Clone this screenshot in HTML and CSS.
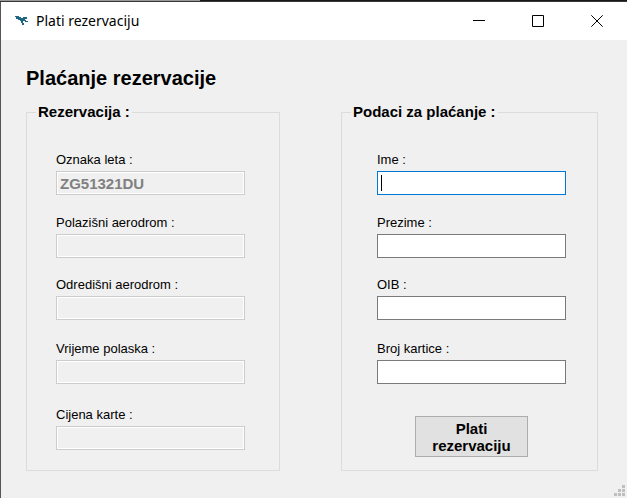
FILE: index.html
```html
<!DOCTYPE html>
<html lang="hr">
<head>
<meta charset="utf-8">
<title>Plati rezervaciju</title>
<link rel="stylesheet" href="styles.css">
</head>
<body>
<div class="window">
  <header class="titlebar">
    <svg class="logo" width="14" height="12" viewBox="0 0 14 12" aria-hidden="true">
      <path fill="#1f6684" d="M0 1h4v1h2v1h2V2h4v2h-2v1h1v1h2v1h-3V6H8v2h1v2H7V8H6V6H5V5H3V4H1V2H0z"/>
    </svg>
    <span class="caption">Plati rezervaciju</span>
    <div class="controls">
      <button type="button" class="control" aria-label="Minimiziraj">
        <svg width="12" height="12" viewBox="0 0 12 12"><path d="M0 5.500h12"/></svg>
      </button>
      <button type="button" class="control" aria-label="Maksimiziraj">
        <svg width="12" height="12" viewBox="0 0 12 12"><path d="M.5.500h11v11H.5z"/></svg>
      </button>
      <button type="button" class="control" aria-label="Zatvori">
        <svg width="12" height="12" viewBox="0 0 12 12"><path d="M.3.300l11.400 11.400M11.700.300L.3 11.700"/></svg>
      </button>
    </div>
  </header>
  <main class="content">
    <h1 class="heading">Plaćanje rezervacije</h1>
    <form class="panels">
      <fieldset class="panel">
        <legend>Rezervacija :</legend>
        <div class="fields">
          <div class="field"><label for="oznaka">Oznaka leta :</label><input id="oznaka" type="text" value="ZG51321DU" disabled></div>
          <div class="field"><label for="polaziste">Polazišni aerodrom :</label><input id="polaziste" type="text" disabled></div>
          <div class="field"><label for="odrediste">Odredišni aerodrom :</label><input id="odrediste" type="text" disabled></div>
          <div class="field"><label for="vrijeme">Vrijeme polaska :</label><input id="vrijeme" type="text" disabled></div>
          <div class="field"><label for="cijena">Cijena karte :</label><input id="cijena" type="text" disabled></div>
        </div>
      </fieldset>
      <fieldset class="panel panel-payment">
        <legend>Podaci za plaćanje :</legend>
        <div class="fields">
          <div class="field"><label for="ime">Ime :</label><input id="ime" class="active" type="text"></div>
          <div class="field"><label for="prezime">Prezime :</label><input id="prezime" type="text"></div>
          <div class="field"><label for="oib">OIB :</label><input id="oib" type="text"></div>
          <div class="field"><label for="kartica">Broj kartice :</label><input id="kartica" type="text"></div>
          <button type="button" class="pay">Plati rezervaciju</button>
        </div>
      </fieldset>
    </form>
  </main>
  <svg class="grip" width="11" height="11" viewBox="0 0 11 11" aria-hidden="true">
    <path fill="#bfbfbf" d="M8 0h3v3H8zM4 4h3v3H4zM8 4h3v3H8zM0 8h3v3H0zM4 8h3v3H4zM8 8h3v3H8z"/>
  </svg>
</div>
</body>
</html>
```

FILE: styles.css
```css
*,
*::before {
  box-sizing: border-box;
}

body {
  margin: 0;
  background: #f0f0f0;
  color: #000;
  font: 13px/16px "Liberation Sans", Arial, sans-serif;
}

.window {
  position: relative;
  min-height: 100vh;
  border-left: 1px solid #555;
}

.window::before {
  content: "";
  display: block;
  height: 2px;
  margin-left: -1px;
  background: linear-gradient(90deg, #999 200px, #1b181b 200px);
  border-bottom: 1px solid #39363a;
}

.titlebar {
  display: flex;
  align-items: center;
  height: 38px;
  padding-left: 14px;
  background: #fff;
}

.caption {
  margin-left: 7px;
  font: 14px/20px "Noto Sans", "Open Sans", sans-serif;
}

.controls {
  display: flex;
  height: 100%;
  margin-left: auto;
  padding-right: 1px;
}

.control {
  display: grid;
  place-items: center;
  width: 59px;
  padding: 0;
  border: 0;
  background: none;
}

.control svg {
  fill: none;
  stroke: #000;
}

.content {
  padding: 27px 29px 26px 25px;
}

.heading {
  margin: 0 0 14px;
  font-size: 20px;
  line-height: 22px;
}

.panels {
  display: grid;
  grid-template-columns: 254fr 257fr;
  gap: 61px;
}

.panel {
  min-width: 0;
  margin: 0;
  padding: 31px 34px 13px 29px;
  border: 1px solid #dcdcdc;
}

.panel-payment {
  padding-left: 35px;
  padding-right: 31px;
}

.panel legend {
  margin-left: -20px;
  padding: 0 2px;
  font-size: 15px;
  font-weight: bold;
  line-height: 18px;
}

.panel-payment legend {
  margin-left: -26px;
}

.fields {
  display: grid;
  grid-template-rows: 63px 62px 64px 66px 50px;
}

.field {
  display: flex;
  flex-direction: column;
  gap: 3px;
}

.field input {
  width: 100%;
  height: 24px;
  padding: 0 3px;
  border: 1px solid #7a7a7a;
  border-radius: 0;
  outline: 0;
  background: #fff;
  font: bold 15px/20px "Liberation Sans", Arial, sans-serif;
}

.field input:disabled {
  border-color: #ccc;
  background: #f0f0f0;
  box-shadow: inset 0 0 0 1px #fff;
  color: #808080;
}

.field input.active {
  border-color: #0078d7;
  background: #fff linear-gradient(#000, #000) 3px center / 1px 16px no-repeat;
}

.pay {
  place-self: end center;
  width: 113px;
  height: 41px;
  padding: 0 12px;
  border: 1px solid #adadad;
  background: #e1e1e1;
  color: #000;
  font: bold 15px/17px "Liberation Sans", Arial, sans-serif;
}

.grip {
  position: absolute;
  right: 2px;
  bottom: 2px;
}
```
